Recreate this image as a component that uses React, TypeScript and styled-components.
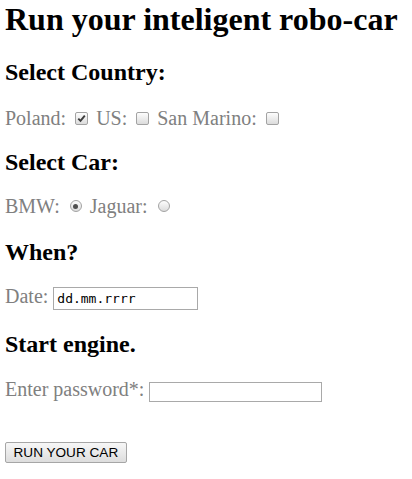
import { createGlobalStyle, styled } from 'styled-components';

const GlobalStyle = createGlobalStyle`
  html, body {
    margin: 0;
    padding: 0;
    background: #ffffff;
  }
`;

const Page = styled.form`
  display: flex;
  flex-direction: column;
  align-items: flex-start;
  padding: 1px 0 0 5px;
  font-family: 'Liberation Serif', 'Times New Roman', serif;
  color: #000;
`;

const Title = styled.h1`
  margin: 0;
  font-size: 32px;
  line-height: 37px;
  font-weight: bold;
`;

const SectionTitle = styled.h2<{ $top: number }>`
  margin: ${(p) => p.$top}px 0 0;
  font-size: 24px;
  line-height: 28px;
  font-weight: bold;
`;

const Row = styled.div<{ $top: number; $align?: string }>`
  display: flex;
  align-items: ${(p) => p.$align ?? 'center'};
  gap: 8px;
  margin-top: ${(p) => p.$top}px;
  font-size: 20px;
  line-height: 23px;
  color: #808080;
`;

const Option = styled.label<{ $gap?: number }>`
  display: inline-flex;
  align-items: center;
  gap: ${(p) => p.$gap ?? 9}px;
`;

const FieldLabel = styled.label`
  display: inline-flex;
  align-items: flex-start;
  gap: 5px;
`;

const Box = styled.span<{ $round?: boolean }>`
  display: inline-flex;
  align-items: center;
  justify-content: center;
  box-sizing: border-box;
  width: ${(p) => (p.$round ? 12 : 13)}px;
  height: ${(p) => (p.$round ? 12 : 13)}px;
  margin-top: -1px;
  border: 1px solid #a3a3a3;
  border-radius: ${(p) => (p.$round ? '50%' : '2px')};
  background: linear-gradient(#fdfdfd, #dcdcdc);
`;

const Dot = styled.span`
  width: 5px;
  height: 5px;
  border-radius: 50%;
  background: #4f4f4f;
`;

const TextInput = styled.input<{ $w: number; $h: number; $offset: number }>`
  box-sizing: border-box;
  width: ${(p) => p.$w}px;
  height: ${(p) => p.$h}px;
  margin: ${(p) => p.$offset}px 0 0;
  padding: 0 3px;
  border: 1px solid #a9a9a9;
  border-radius: 0;
  background: #fff;
  font-family: 'DejaVu Sans Mono', 'Liberation Mono', monospace;
  font-size: 13px;
  color: #000;
  outline: none;

  &::placeholder {
    color: #000;
    opacity: 1;
  }
`;

const RunButton = styled.button`
  margin-top: 40px;
  height: 21px;
  padding: 0 7.5px;
  border: 1px solid #a6a6a6;
  border-radius: 2px;
  background: linear-gradient(#f7f7f7, #dddddd);
  font-family: 'Liberation Sans', Arial, sans-serif;
  font-size: 13.6px;
  line-height: 19px;
  color: #000;
`;

function Check({ checked = false }: { checked?: boolean }) {
  return (
    <Box role="checkbox" aria-checked={checked}>
      {checked && (
        <svg width="9" height="9" viewBox="0 0 9 9">
          <path
            d="M1.3 4.6 L3.5 6.8 L7.8 1.6"
            fill="none"
            stroke="#3c3c3c"
            strokeWidth="1.9"
          />
        </svg>
      )}
    </Box>
  );
}

function Radio({ checked = false }: { checked?: boolean }) {
  return (
    <Box $round role="radio" aria-checked={checked}>
      {checked && <Dot />}
    </Box>
  );
}

export default function App() {
  return (
    <>
      <GlobalStyle />
      <Page onSubmit={(e) => e.preventDefault()}>
        <Title>Run your inteligent robo-car</Title>

        <SectionTitle $top={20}>Select Country:</SectionTitle>
        <Row $top={21}>
          <Option>
            <span>Poland:</span>
            <Check checked />
          </Option>
          <Option>
            <span>US:</span>
            <Check />
          </Option>
          <Option>
            <span>San Marino:</span>
            <Check />
          </Option>
        </Row>

        <SectionTitle $top={18}>Select Car:</SectionTitle>
        <Row $top={19}>
          <Option $gap={10}>
            <span>BMW:</span>
            <Radio checked />
          </Option>
          <Option $gap={10}>
            <span>Jaguar:</span>
            <Radio />
          </Option>
        </Row>

        <SectionTitle $top={20}>When?</SectionTitle>
        <Row $top={19} $align="flex-start">
          <FieldLabel>
            <span>Date:</span>
            <TextInput $w={145} $h={23} $offset={2} placeholder="dd.mm.rrrr" />
          </FieldLabel>
        </Row>

        <SectionTitle $top={20}>Start engine.</SectionTitle>
        <Row $top={20} $align="flex-start">
          <FieldLabel>
            <span>Enter password*:</span>
            <TextInput $w={173} $h={20} $offset={4} type="password" />
          </FieldLabel>
        </Row>

        <RunButton type="submit">RUN YOUR CAR</RunButton>
      </Page>
    </>
  );
}
